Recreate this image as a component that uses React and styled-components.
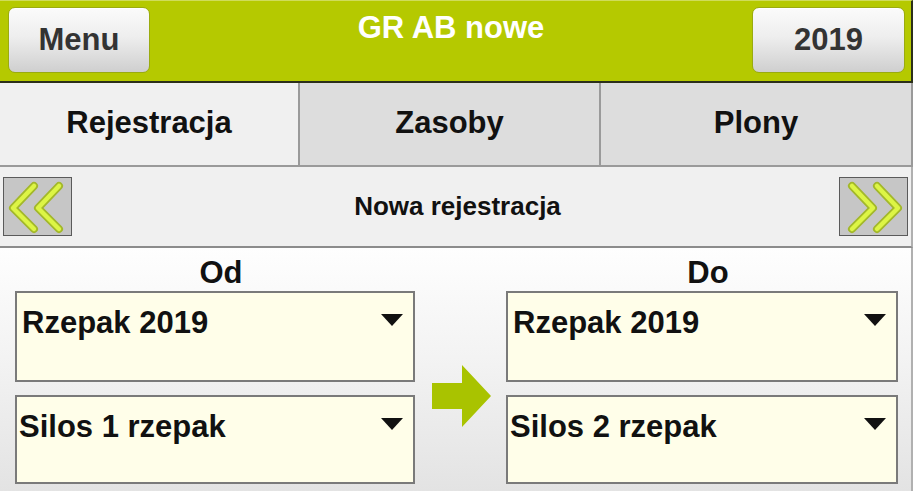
import React from "react";
import styled, { createGlobalStyle } from "styled-components";

const GlobalStyle = createGlobalStyle`
  html, body {
    margin: 0;
    padding: 0;
    background: #ffffff;
  }
  body {
    font-family: "Liberation Sans", Arial, sans-serif;
  }
`;

const Screen = styled.div`
  width: 913px;
  height: 491px;
  display: flex;
  flex-direction: column;
  overflow: hidden;
`;

/* ================= header ================= */
const Header = styled.header`
  flex: none;
  height: 83px;
  box-sizing: border-box;
  display: grid;
  grid-template-columns: 142px 1fr 153px;
  align-items: center;
  padding: 0 6px 0 8px;
  background: #b5c900;
  border-top: 1px solid #cfdc5a;
  border-bottom: 2px solid #2b2f1a;
  border-right: 2px solid #2b2f1a;
`;

const HeaderButton = styled.button`
  height: 66px;
  margin-top: -3px;
  border: 1px solid #9aab10;
  border-radius: 7px;
  background: linear-gradient(#fbfbfb 0%, #eeeeee 45%, #cfcfcf 100%);
  box-shadow: inset 0 1px 0 #ffffff;
  font-family: inherit;
  font-weight: bold;
  font-size: 31px;
  color: #333333;
  padding: 0;
  cursor: pointer;
`;

const Title = styled.h1`
  margin: 0;
  align-self: start;
  padding-top: 9px;
  text-align: center;
  color: #ffffff;
  font-size: 31px;
  line-height: 36px;
  font-weight: bold;
`;

/* ================= tabs ================= */
const Tabs = styled.nav`
  flex: none;
  height: 84px;
  display: grid;
  grid-template-columns: 300px 301px 1fr;
  border-bottom: 2px solid #9a9a9a;
  box-sizing: border-box;
`;

const Tab = styled.div`
  display: flex;
  align-items: center;
  justify-content: center;
  background: ${(p) => (p.$active ? "#f0f0f0" : "#dddddd")};
  border-right: 2px solid #9a9a9a;
  font-size: 31px;
  font-weight: bold;
  color: #111111;
  padding-bottom: 2px;
`;

/* ================= nav row ================= */
const NavRow = styled.div`
  flex: none;
  height: 81px;
  box-sizing: border-box;
  display: flex;
  align-items: center;
  justify-content: space-between;
  padding: 0 3px 0 3px;
  background: #f0f0f0;
  border-bottom: 2px solid #8c8c8c;
  border-right: 2px solid #b0b0b0;
`;

const NavButton = styled.button`
  width: 69px;
  height: 59px;
  padding: 0;
  border: 1px solid #5a5a5a;
  background: #c6c6c6;
  display: flex;
  align-items: center;
  justify-content: center;
  cursor: pointer;
`;

const NavTitle = styled.div`
  font-size: 26px;
  font-weight: bold;
  color: #111111;
  padding-left: 4px;
`;

/* ================= content ================= */
const Content = styled.main`
  flex: 1;
  display: grid;
  grid-template-columns: 400px 91px 1fr;
  padding: 7px 13px 0 15px;
  background: linear-gradient(#fefefe 0%, #f3f3f3 45%, #e3e3e3 100%);
  border-right: 2px solid #b0b0b0;
`;

const Column = styled.section`
  display: flex;
  flex-direction: column;
  gap: 13px;
`;

const Label = styled.div`
  text-align: center;
  font-size: 31px;
  line-height: 36px;
  font-weight: bold;
  color: #111111;
  padding-left: 12px;
  margin-bottom: -13px;
`;

const Select = styled.div`
  position: relative;
  height: ${(p) => p.$h}px;
  box-sizing: border-box;
  border: 2px solid #7a7a7a;
  background: #fffee9;
  padding: 13px 40px 0 ${(p) => p.$inset}px;
  font-size: 31px;
  line-height: 34px;
  font-weight: bold;
  color: #111111;
`;

const Caret = styled.span`
  position: absolute;
  top: 21px;
  right: 10px;
  width: 0;
  height: 0;
  border-left: 11px solid transparent;
  border-right: 11px solid transparent;
  border-top: 12px solid #111111;
`;

const ArrowCell = styled.div`
  display: flex;
  align-items: center;
  justify-content: center;
  padding-top: 46px;
  padding-left: 1px;
`;

function Chevrons({ flip }) {
  const pts = ["30,8 9,30 30,51", "55,8 34,30 55,51"];
  return (
    <svg width="67" height="57" viewBox="0 0 67 57">
      <g transform={flip ? "translate(67,0) scale(-1,1)" : undefined}>
        {pts.map((p) => (
          <polyline
            key={p + "o"}
            points={p}
            fill="none"
            stroke="#a3b82a"
            strokeWidth="8"
            strokeLinecap="round"
            strokeLinejoin="round"
          />
        ))}
        {pts.map((p) => (
          <polyline
            key={p + "i"}
            points={p}
            fill="none"
            stroke="#ddf545"
            strokeWidth="4.5"
            strokeLinecap="round"
            strokeLinejoin="round"
          />
        ))}
      </g>
    </svg>
  );
}

function GreenArrow() {
  return (
    <svg width="59" height="62" viewBox="0 0 59 62">
      <polygon
        points="0,18 30,18 30,0 59,31 30,62 30,44 0,44"
        fill="#a9c300"
      />
    </svg>
  );
}

function Dropdown({ value, h, inset }) {
  return (
    <Select $h={h} $inset={inset}>
      {value}
      <Caret />
    </Select>
  );
}

export default function App() {
  return (
    <>
      <GlobalStyle />
      <Screen>
        <Header>
          <HeaderButton>Menu</HeaderButton>
          <Title>GR AB nowe</Title>
          <HeaderButton>2019</HeaderButton>
        </Header>

        <Tabs>
          <Tab $active>Rejestracja</Tab>
          <Tab>Zasoby</Tab>
          <Tab>Plony</Tab>
        </Tabs>

        <NavRow>
          <NavButton>
            <Chevrons />
          </NavButton>
          <NavTitle>Nowa rejestracja</NavTitle>
          <NavButton>
            <Chevrons flip />
          </NavButton>
        </NavRow>

        <Content>
          <Column>
            <Label>Od</Label>
            <Dropdown value="Rzepak 2019" h={91} inset={5} />
            <Dropdown value="Silos 1 rzepak" h={89} inset={2} />
          </Column>
          <ArrowCell>
            <GreenArrow />
          </ArrowCell>
          <Column>
            <Label>Do</Label>
            <Dropdown value="Rzepak 2019" h={91} inset={5} />
            <Dropdown value="Silos 2 rzepak" h={89} inset={2} />
          </Column>
        </Content>
      </Screen>
    </>
  );
}
